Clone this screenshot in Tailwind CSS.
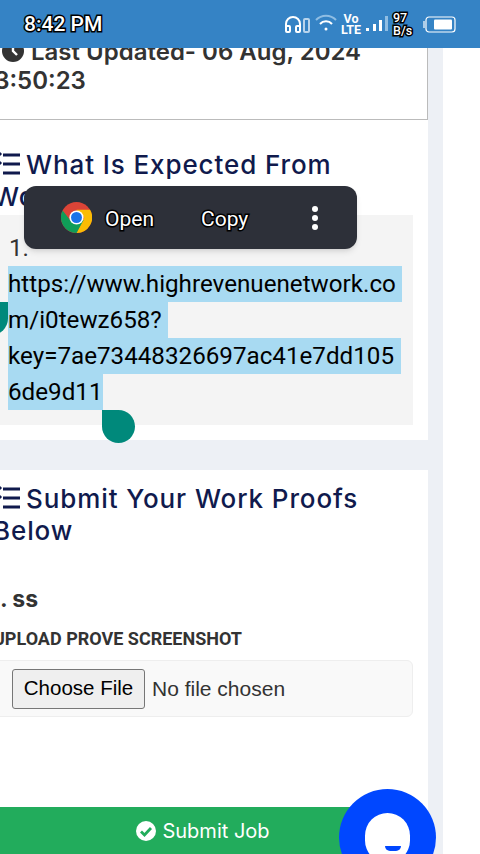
<!DOCTYPE html>
<html lang="en">
<head>
    <meta charset="UTF-8">
    <meta name="viewport" content="width=device-width, initial-scale=1.0">
    <title>Job Details</title>
    <script src="https://cdn.jsdelivr.net/npm/@tailwindcss/browser@4"></script>
</head>
<body class="bg-white">
    <div class="relative w-[480px] h-[854px] overflow-hidden bg-white font-['Roboto',sans-serif]">

        <!-- Page, scrolled sideways -->
        <div class="w-[443px] h-[854px] bg-[#edf0f5] overflow-hidden">
            <div class="w-[450px] -ml-[22px]">

                <!-- Last updated card -->
                <div class="h-[120px] bg-white border-r border-b border-[#bbbbbb] pt-[37px] pl-[24px]">
                    <p class="font-['Inter',sans-serif] font-semibold text-[24px] leading-[29px] text-[#333333] flex flex-wrap">
                        <svg class="w-[22px] h-[22px] mt-[3px] mr-[7px]" viewBox="0 0 22 22"><circle cx="11" cy="11" r="11" fill="#333333"/><path d="M11 4v7l4 4" stroke="#fff" stroke-width="2.4" fill="none"/></svg>
                        <span>Last Updated- 06 Aug, 2024</span>
                        <span class="w-full -ml-[18px]">13:50:23</span>
                    </p>
                </div>

                <!-- Expected card -->
                <div class="h-[320px] bg-white px-[15px] pt-[29px]">
                    <h2 class="font-['Inter',sans-serif] font-medium text-[26px] tracking-[0.9px] leading-[32px] text-[#101a4d] flex flex-wrap">
                        <svg class="w-[27px] h-[25px] mt-[3px] mr-[6px]" viewBox="0 0 27 25"><path d="M10 3h17M10 12h17M10 21h17M0 3l3 3 5-5M0 12l3 3 5-5" stroke="#101a4d" stroke-width="3" fill="none"/></svg>
                        <span>What Is Expected From</span>
                        <span class="w-full">Work</span>
                    </h2>
                    <div class="mt-[2px] h-[210px] w-[420px] bg-[#f4f4f4] pt-[15px] pl-[15px] text-[24.2px] leading-[36px] text-black">
                        <div class="pl-[1px] h-[36px] text-[#333333]">1.</div>
                        <div class="flex flex-col items-start">
                            <span class="bg-[#a8daf2] w-[394px] h-[36px]">https://www.highrevenuenetwork.co</span>
                            <span class="bg-[#a8daf2] w-[160px] h-[36px]">m/i0tewz658?</span>
                            <span class="bg-[#a8daf2] w-[393px] h-[36px]">key=7ae73448326697ac41e7dd105</span>
                            <span class="bg-[#a8daf2] w-[95px] h-[36px]">6de9d11</span>
                        </div>
                    </div>
                </div>

                <div class="h-[30px]"></div>

                <!-- Proofs card -->
                <div class="h-[384px] bg-white px-[15px] pt-[13px]">
                    <h2 class="font-['Inter',sans-serif] font-medium text-[26px] tracking-[0.9px] leading-[32px] text-[#101a4d] flex flex-wrap">
                        <svg class="w-[27px] h-[25px] mt-[3px] mr-[6px]" viewBox="0 0 27 25"><path d="M10 3h17M10 12h17M10 21h17M0 3l3 3 5-5M0 12l3 3 5-5" stroke="#101a4d" stroke-width="3" fill="none"/></svg>
                        <span>Submit Your Work Proofs</span>
                        <span class="w-full">Below</span>
                    </h2>
                    <h3 class="mt-[38px] -ml-[3px] font-['Inter',sans-serif] font-bold text-[23px] leading-[28px] text-[#333333]">1. ss</h3>
                    <label class="block mt-[16px] font-bold text-[18px] leading-[20px] text-[#333333]">UPLOAD PROVE SCREENSHOT</label>
                    <div class="mt-[11px] w-[420px] h-[57px] bg-[#f9f9f9] border border-[#eeeeee] rounded-md flex items-center pl-[18px]">
                        <input type="file" class="font-['Liberation_Sans',sans-serif] text-[21px] text-[#333333] file:h-[40px] file:w-[133px] file:mr-[7px] file:bg-[#efefef] file:border file:border-[#767676] file:rounded-[3px] file:text-[20.5px] file:text-black">
                    </div>
                    <button class="mt-[90px] w-[420px] h-[47px] bg-[#22ac5c] text-white font-['Inter',sans-serif] text-[20px] flex items-center justify-center gap-[6px]">
                        <svg class="w-[20px] h-[20px]" viewBox="0 0 20 20"><circle cx="10" cy="10" r="10" fill="#fff"/><path d="M5 10.5l3.5 3.5L15 7" stroke="#22ac5c" stroke-width="2.8" fill="none"/></svg>
                        Submit Job
                    </button>
                </div>
            </div>
        </div>

        <!-- Android status bar -->
        <div class="absolute top-0 left-0 w-[480px] h-[48px] bg-[#3583c5] text-white">
            <span class="absolute left-[24px] top-[12px] text-[21px] leading-[24px] font-medium [-webkit-text-stroke:3px_black] [paint-order:stroke_fill]">8:42 PM</span>
            <svg class="absolute left-[284px] top-[15px]" width="26" height="18" viewBox="0 0 26 18" fill="none" stroke="#ffffff" stroke-width="2"><path d="M2 12V9a7 7 0 0 1 14 0v3"/><rect x="2" y="11" width="4" height="6" rx="1"/><rect x="12" y="11" width="4" height="6" rx="1"/><rect x="20" y="4" width="5" height="13" rx="1" stroke="#b8d4ec"/></svg>
            <svg class="absolute left-[315px] top-[14px]" width="22" height="18" viewBox="0 0 22 18" fill="none" stroke="#ffffff" stroke-width="2"><path d="M1 6a14 14 0 0 1 20 0" stroke="#8fbde3"/><path d="M5 10a8 8 0 0 1 12 0"/><circle cx="11" cy="15" r="1.5" fill="#fff" stroke="none"/></svg>
            <div class="absolute left-[340px] top-[13px] w-[22px] text-[12.5px] leading-[11px] font-bold text-center">Vo<br>LTE</div>
            <svg class="absolute left-[366px] top-[15px]" width="22" height="18" viewBox="0 0 22 18"><rect x="0" y="13" width="3" height="3" fill="#fff"/><rect x="7" y="9" width="3" height="7" fill="#fff"/><rect x="13" y="5" width="3" height="11" fill="#fff"/><rect x="19" y="1" width="3" height="15" fill="#8fbde3"/></svg>
            <div class="absolute left-[393px] top-[11px] w-[21px] text-[12.5px] leading-[13px] font-medium [-webkit-text-stroke:3px_black] [paint-order:stroke_fill]">97<br>B/s</div>
            <svg class="absolute left-[422px] top-[16px]" width="34" height="18" viewBox="0 0 34 18" fill="none"><rect x="4" y="1" width="29" height="15" rx="3" stroke="#fff" stroke-width="1.2"/><rect x="12" y="3.5" width="18" height="10" rx="1" fill="#fff"/><path d="M2 5v7" stroke="#fff" stroke-width="1.2"/></svg>
        </div>

        <!-- Text selection toolbar -->
        <div class="absolute left-[24px] top-[186px] w-[333px] h-[63px] bg-[#2d3039] rounded-xl text-white text-[21px] shadow-md">
            <svg class="absolute left-[37px] top-[16px]" width="31" height="31" viewBox="0 0 48 48">
                <circle cx="24" cy="24" r="24" fill="#db4437"/>
                <path d="M24 48 A24 24 0 0 0 45 12 L24 12 L36 24Z" fill="#fbbc04"/>
                <path d="M2.5 13 A24 24 0 0 0 24 48 L35 28 L14 28Z" fill="#0f9d58"/>
                <circle cx="24" cy="24" r="11" fill="#fff"/>
                <circle cx="24" cy="24" r="8.5" fill="#1a73e8"/>
            </svg>
            <span class="absolute left-[81px] top-[21px] leading-[24px] [-webkit-text-stroke:3px_black] [paint-order:stroke_fill]">Open</span>
            <span class="absolute left-[177px] top-[21px] leading-[24px] [-webkit-text-stroke:3px_black] [paint-order:stroke_fill]">Copy</span>
            <div class="absolute left-[288px] top-[20px] flex flex-col gap-[3px]">
                <span class="w-[6px] h-[6px] rounded-full bg-white"></span>
                <span class="w-[6px] h-[6px] rounded-full bg-white"></span>
                <span class="w-[6px] h-[6px] rounded-full bg-white"></span>
            </div>
        </div>

        <!-- Selection handles -->
        <div class="absolute left-[-25px] top-[302px] w-[33px] h-[33px] bg-[#00897b] rounded-b-full rounded-tl-full"></div>
        <div class="absolute left-[102px] top-[410px] w-[33px] h-[33px] bg-[#00897b] rounded-b-full rounded-tr-full"></div>

        <!-- Chat bubble -->
        <div class="absolute left-[339px] top-[789px] w-[97px] h-[97px] rounded-full bg-[#0047ff]">
            <div class="absolute left-[26px] top-[24px] w-[45px] h-[50px] rounded-full bg-white">
                <div class="absolute left-[20px] top-[33px] w-[16px] h-[5px] bg-[#0047ff] rounded-b-full"></div>
            </div>
        </div>
    </div>
</body>
</html>
